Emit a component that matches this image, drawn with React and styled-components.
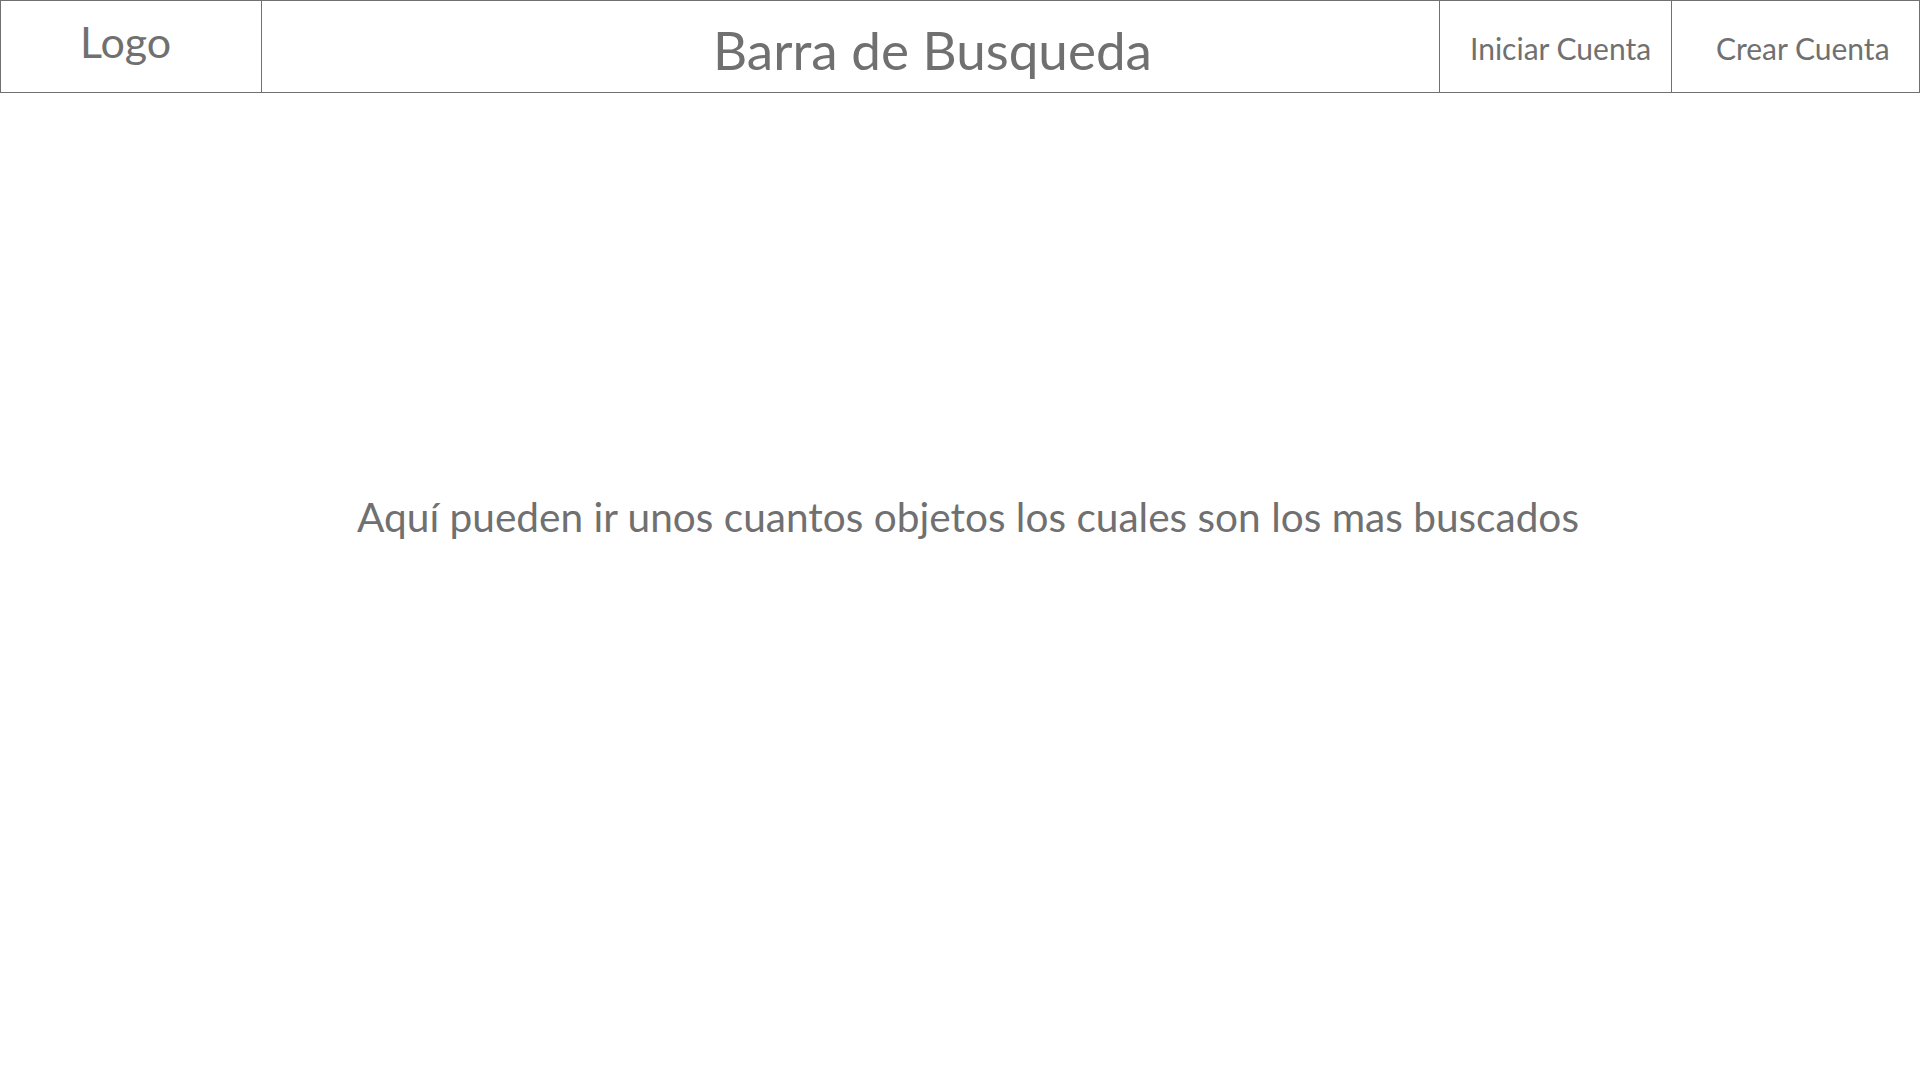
import React from 'react';
import styled, { createGlobalStyle } from 'styled-components';

const GlobalStyle = createGlobalStyle`
  html, body {
    margin: 0;
    padding: 0;
    background: #ffffff;
  }
  body {
    font-family: Lato, "Open Sans", sans-serif;
    color: #707070;
  }
`;

export default function App() {
  return (
    <>
      <GlobalStyle />
      <Page>
        <Header>
          <LogoCell>Logo</LogoCell>
          <SearchCell>Barra de Busqueda</SearchCell>
          <AccountCell width={232} pad={30}>Iniciar Cuenta</AccountCell>
          <AccountCell width={249} pad={44} last>Crear Cuenta</AccountCell>
        </Header>
        <Main>
          <Featured>Aquí pueden ir unos cuantos objetos los cuales son los mas buscados</Featured>
        </Main>
      </Page>
    </>
  );
}

const Page = styled.div`
  width: 1920px;
  height: 1080px;
  display: flex;
  flex-direction: column;
`;

const Header = styled.div`
  display: flex;
  height: 93px;
  box-sizing: border-box;
  border-top: 1px solid #707070;
  border-bottom: 1px solid #707070;
`;

const Cell = styled.div`
  display: flex;
  align-items: center;
  box-sizing: border-box;
  border-left: 1px solid #707070;
  white-space: nowrap;
`;

const LogoCell = styled(Cell)`
  width: 261px;
  padding-left: 79px;
  padding-bottom: 10px;
  font-size: 43px;
`;

const SearchCell = styled(Cell)`
  width: 1178px;
  padding-left: 451px;
  padding-top: 6px;
  font-size: 53px;
`;

const AccountCell = styled(Cell)`
  width: ${p => p.width}px;
  padding-left: ${p => p.pad}px;
  padding-top: 2px;
  font-size: 30px;
  border-right: ${p => (p.last ? '1px solid #707070' : 'none')};
`;

const Main = styled.div`
  flex: 1;
  display: flex;
  justify-content: center;
  padding-top: 399px;
  padding-left: 16px;
`;

const Featured = styled.div`
  font-size: 40.6px;
  white-space: nowrap;
`;
